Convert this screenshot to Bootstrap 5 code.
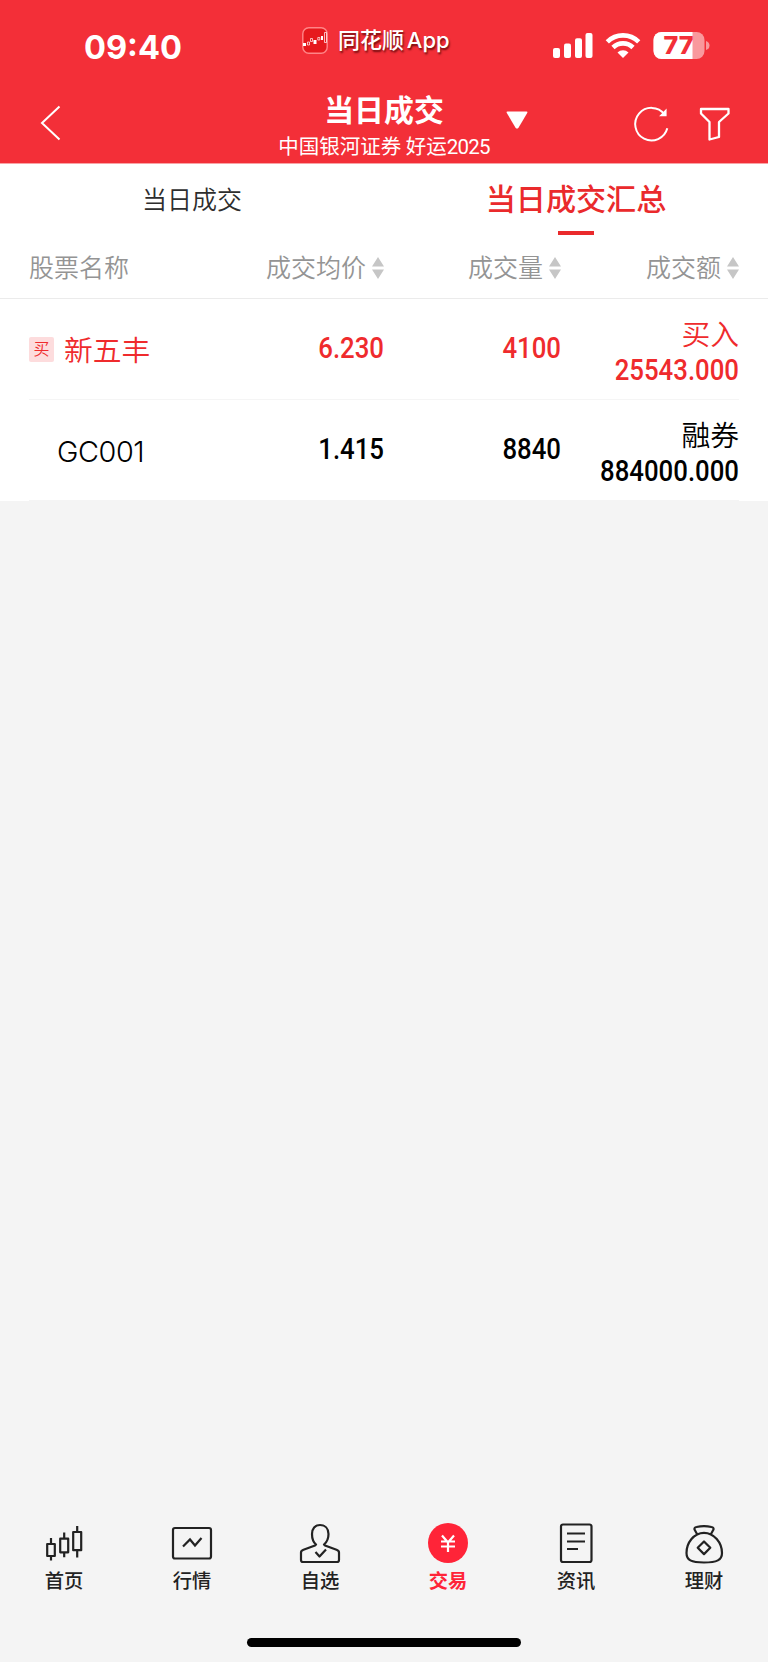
<!DOCTYPE html>
<html lang="zh-CN">
<head>
<meta charset="utf-8">
<meta name="viewport" content="width=device-width, initial-scale=1">
<title>当日成交汇总</title>
<link href="https://cdn.jsdelivr.net/npm/bootstrap@5.3.0/dist/css/bootstrap.min.css" rel="stylesheet">
<style>
:root { --app-red: #f32f38; --buy-red: #ef2b2d; }
body { background: #f4f4f4; color: #000; height: 1662px; overflow: hidden; font-family: Inter, "Noto Sans CJK SC", sans-serif; font-weight: 350; }
svg { display: block; flex: none; }
.app-head { background: var(--app-red); height: 164px; color: #fff; border-bottom: 1px solid #f9a3a5; }
.status-bar { height: 87px; display: grid; grid-template-columns: 302px 251px 1fr; }
.clock { font-size: 32.6px; line-height: 40px; font-weight: 700; padding: 27px 0 0 84px; }
.app-tag { font-size: 22px; line-height: 28px; font-weight: 500; padding-top: 27px; gap: 10px; text-shadow: 1px 2px 2px rgba(70,0,0,.75); }
.app-tag span { line-height: 27px; word-spacing: -3px; }
.signals { padding-top: 30px; }
.title-bar { height: 76px; display: grid; grid-template-columns: 263px 242px 1fr; }
.page-title { font-size: 29.9px; line-height: 36px; font-weight: 700; padding-top: 5px; }
.account { font-size: 20.5px; line-height: 26px; font-weight: 400; margin-top: 4px; font-family: "Noto Sans CJK SC", sans-serif; }
.account span { letter-spacing: -.8px; font-family: Roboto, sans-serif; font-size: 20.5px; }
.tab-strip { height: 76px; }
.tab-strip .nav-link { height: 72px; padding: 0; border: 0; color: #2e2e2e; font-size: 25px; line-height: 72px; }
.tab-strip .nav-link.active { position: relative; color: #ea2a2c; font-size: 30.1px; line-height: 70px; font-weight: 500; }
.tab-strip .nav-link.active::after { content: ""; position: absolute; left: calc(50% - 18px); bottom: 1px; width: 36px; height: 4px; background: #ea2a2c; }
.grid-row { display: grid; grid-template-columns: 207px 148px 177px 178px; margin: 0 29px; }
.grid-row > * { min-width: 0; }
.col-head { height: 59px; border-bottom: 1px solid #ebebeb; color: #949494; font-size: 25px; line-height: 56px; }
.col-head .sortable { gap: 6px; white-space: nowrap; }
.deal { height: 101px; border-bottom: 1px solid #f5f5f5; font-size: 28.8px; }
.deal:last-child { border-color: #f4f4f4; }
.buy { color: var(--buy-red); }
.side-tag { width: 25px; height: 25px; border-radius: 2px; background: #fddcdd; font-size: 16px; line-height: 24px; margin-right: 10px; }
.num { font-family: Roboto, sans-serif; font-weight: 500; font-size: 28.8px; line-height: 36px; transform: scaleX(.895); transform-origin: right; }
.num.solo { margin-top: 31px; }
.kind { line-height: 36px; margin-top: 18px; font-size: 28.8px; }
.kind + .num { margin-top: -1px; }
.ticker { line-height: 40px; padding-top: 3px; }
.ticker.latin { letter-spacing: -.4px; font-weight: 300; }
.dock { height: 144px; color: #222; }
.dock .nav-link { color: inherit; padding: 2px 0 0; font-size: 19.3px; line-height: 34px; font-weight: 500; }
.dock .nav-link.active { color: #ff2438; font-weight: 700; }
.home-bar { width: 274px; height: 9px; border-radius: 5px; background: #000; margin-bottom: 15px; }
</style>
</head>
<body class="d-flex flex-column">
<header class="app-head">
  <div class="status-bar">
    <div class="clock">09:40</div>
    <div class="app-tag d-flex align-items-start">
      <svg width="26" height="27" viewBox="0 0 26 27"><rect x=".8" y=".8" width="24.4" height="25.4" rx="6" fill="#e6191d" stroke="#ff8587" stroke-width="1.4"/><path d="M1 16h3v3H1zM11.500 13h3v4h-3zM19 9h2v4h-2z" fill="#fff"/><path d="M5.500 15h2v3h-2zM8.500 11.500h2v3h-2zM15.800 10.500h2v2.500h-2zM22.500 5.500h2v10h-2z" fill="none" stroke="#fff" stroke-width=".7"/></svg>
      <span class="text-nowrap">同花顺 App</span>
    </div>
    <div class="signals d-flex">
      <svg width="160" height="32" viewBox="553 30 160 32">
        <g fill="#fff"><rect x="553" y="48" width="7" height="10" rx="2"/><rect x="564" y="43.500" width="7" height="14.500" rx="2"/><rect x="575" y="38.300" width="7" height="19.700" rx="2"/><rect x="585.500" y="33" width="7" height="25" rx="2"/></g>
        <g fill="none" stroke="#fff" stroke-width="4.600"><path d="M607.300 41.800a22.300 22.300 0 0 1 31.400 0"/><path d="M613 47.500a14.200 14.200 0 0 1 20 0"/></g>
        <path d="M617.500 52.500a7.900 7.900 0 0 1 11 0l-5.500 5.500z" fill="#fff"/>
        <clipPath id="charge"><path d="M653 32h39.500v27H653z"/></clipPath>
        <rect x="653.500" y="32" width="51" height="27" rx="8" fill="#f9999d"/>
        <rect x="653.500" y="32" width="51" height="27" rx="8" fill="#fff" clip-path="url(#charge)"/>
        <path d="M706 41q3.500 1 3.500 4.500T706 50z" fill="#f9999d"/>
        <text x="663.500" y="54" fill="#f32f38" font-family="Inter, sans-serif" font-weight="800" font-size="24.500" textLength="30" lengthAdjust="spacingAndGlyphs">77</text>
      </svg>
    </div>
  </div>
  <div class="title-bar">
    <div><svg width="80" height="60" viewBox="0 87 80 60" fill="none" stroke="#fff" stroke-width="2"><path d="M59.500 106.500L42 123l17.500 16.500"/></svg></div>
    <div class="text-center text-nowrap">
      <div class="page-title">当日成交</div>
      <div class="account">中国银河证券 好运<span>2025</span></div>
    </div>
    <svg width="240" height="60" viewBox="505 87 240 60">
      <path d="M507.500 111.500h19q1.500 0 .7 1.400l-8.700 14.800q-1.500 1.800-3 0l-8.700-14.800q-.8-1.400.7-1.400z" fill="#fff"/>
      <g fill="none" stroke="#fff" stroke-width="2"><path d="M664.500 114.300a16.300 16.300 0 1 0 2.800 14"/><path d="M666 110v5.700h-5.500z" fill="#fff" stroke-width="1.200"/><path d="M701 109h27.500v4.500L719 122v15l-9.500 2.500V122L701 113.500z" stroke-linejoin="round" stroke-width="2.300"/></g>
    </svg>
  </div>
</header>
<main class="bg-white">
  <nav class="tab-strip nav nav-justified flex-nowrap align-items-start">
    <a class="nav-link w-50">当日成交</a>
    <a class="nav-link w-50 active">当日成交汇总</a>
  </nav>
  <div class="col-head">
    <div class="grid-row">
      <span>股票名称</span>
      <span class="sortable d-flex align-items-center justify-content-end">成交均价<svg width="12" height="22" fill="#c6c6c6"><path d="M6 0l6 9.500H0zM0 12.500h12L6 22z"/></svg></span>
      <span class="sortable d-flex align-items-center justify-content-end">成交量<svg width="12" height="22" fill="#c6c6c6"><path d="M6 0l6 9.500H0zM0 12.500h12L6 22z"/></svg></span>
      <span class="sortable d-flex align-items-center justify-content-end">成交额<svg width="12" height="22" fill="#c6c6c6"><path d="M6 0l6 9.500H0zM0 12.500h12L6 22z"/></svg></span>
    </div>
  </div>
  <div class="grid-row deal buy text-end">
    <div class="d-flex align-items-center"><span class="side-tag text-center">买</span><span class="ticker">新五丰</span></div>
    <div class="num solo">6.230</div>
    <div class="num solo">4100</div>
    <div><div class="kind">买入</div><div class="num">25543.000</div></div>
  </div>
  <div class="grid-row deal text-end">
    <div class="d-flex align-items-center ps-4"><span class="ticker latin ps-1">GC001</span></div>
    <div class="num solo">1.415</div>
    <div class="num solo">8840</div>
    <div><div class="kind">融券</div><div class="num">884000.000</div></div>
  </div>
</main>
<footer class="dock mt-auto d-flex flex-column justify-content-between align-items-center">
  <nav class="nav nav-justified flex-nowrap w-100">
    <a class="nav-link"><svg class="mx-auto" width="44" height="44" fill="none" stroke="#222" stroke-width="2.2" stroke-linejoin="round"><path d="M5.200 24h7.600v12H5.200zM9 18v6m0 12v4.500M18.200 18.700h8v13.600h-8zM22.200 12.500v6.200m0 13.600v5M31.200 12h8v18.200h-8zM35.200 6v6m0 18.200v7.300"/></svg>首页</a>
    <a class="nav-link"><svg class="mx-auto" width="44" height="44" fill="none" stroke="#222" stroke-width="2.2"><rect x="3" y="8" width="38" height="30.500" rx="2"/><path d="M13 26.500l7-7 5 6 6.500-7.500"/></svg>行情</a>
    <a class="nav-link"><svg class="mx-auto" width="44" height="44" fill="none" stroke="#222" stroke-width="2.2" stroke-linejoin="round"><path d="M18 24.500c-3-2.500-4-5.500-4-10.500C14 8.500 17 5 22 5s8.500 3.500 8.500 9c0 5-1.500 8-4.500 10.500l1 1 11.500 4.300q2.500 1 2.500 2.700V40q0 2-2 2H5q-2 0-2-2v-7.500q0-1.700 2.500-2.700L17 25.500z"/><path d="M17.500 32l4 4.500 6.500-7"/></svg>自选</a>
    <a class="nav-link active"><svg class="mx-auto" width="44" height="44"><circle cx="22" cy="23" r="20" fill="#ff2438"/><path d="M16 15.500l6 7 6-7M22 22.500V32M15 21.500h14M15 26.500h14" fill="none" stroke="#fff" stroke-width="2.2"/></svg>交易</a>
    <a class="nav-link"><svg class="mx-auto" width="44" height="44" fill="none" stroke="#222" stroke-width="2.2"><rect x="7" y="4.500" width="30.500" height="37.500" rx="2"/><path d="M13 13.500h18M13 21.500h18M13 29h11"/></svg>资讯</a>
    <a class="nav-link"><svg class="mx-auto" width="44" height="44" fill="none" stroke="#222" stroke-width="2.2" stroke-linejoin="round"><path d="M15 14l-2.500-4.500Q12 7.500 14.500 7q7.500-1.700 15 0 2.500.5 2 2.500L29 14M22 12.800c10 0 18 10 18 20.200 0 7-5 9.500-18 9.500S4.500 40 4.500 33C4.500 22.800 12 12.800 22 12.800z"/><path d="M22 21.500l6.300 6.300-6.300 6.300-6.300-6.300z"/></svg>理财</a>
  </nav>
  <div class="home-bar"></div>
</footer>
<script src="https://cdn.jsdelivr.net/npm/bootstrap@5.3.0/dist/js/bootstrap.bundle.min.js"></script>
</body>
</html>
